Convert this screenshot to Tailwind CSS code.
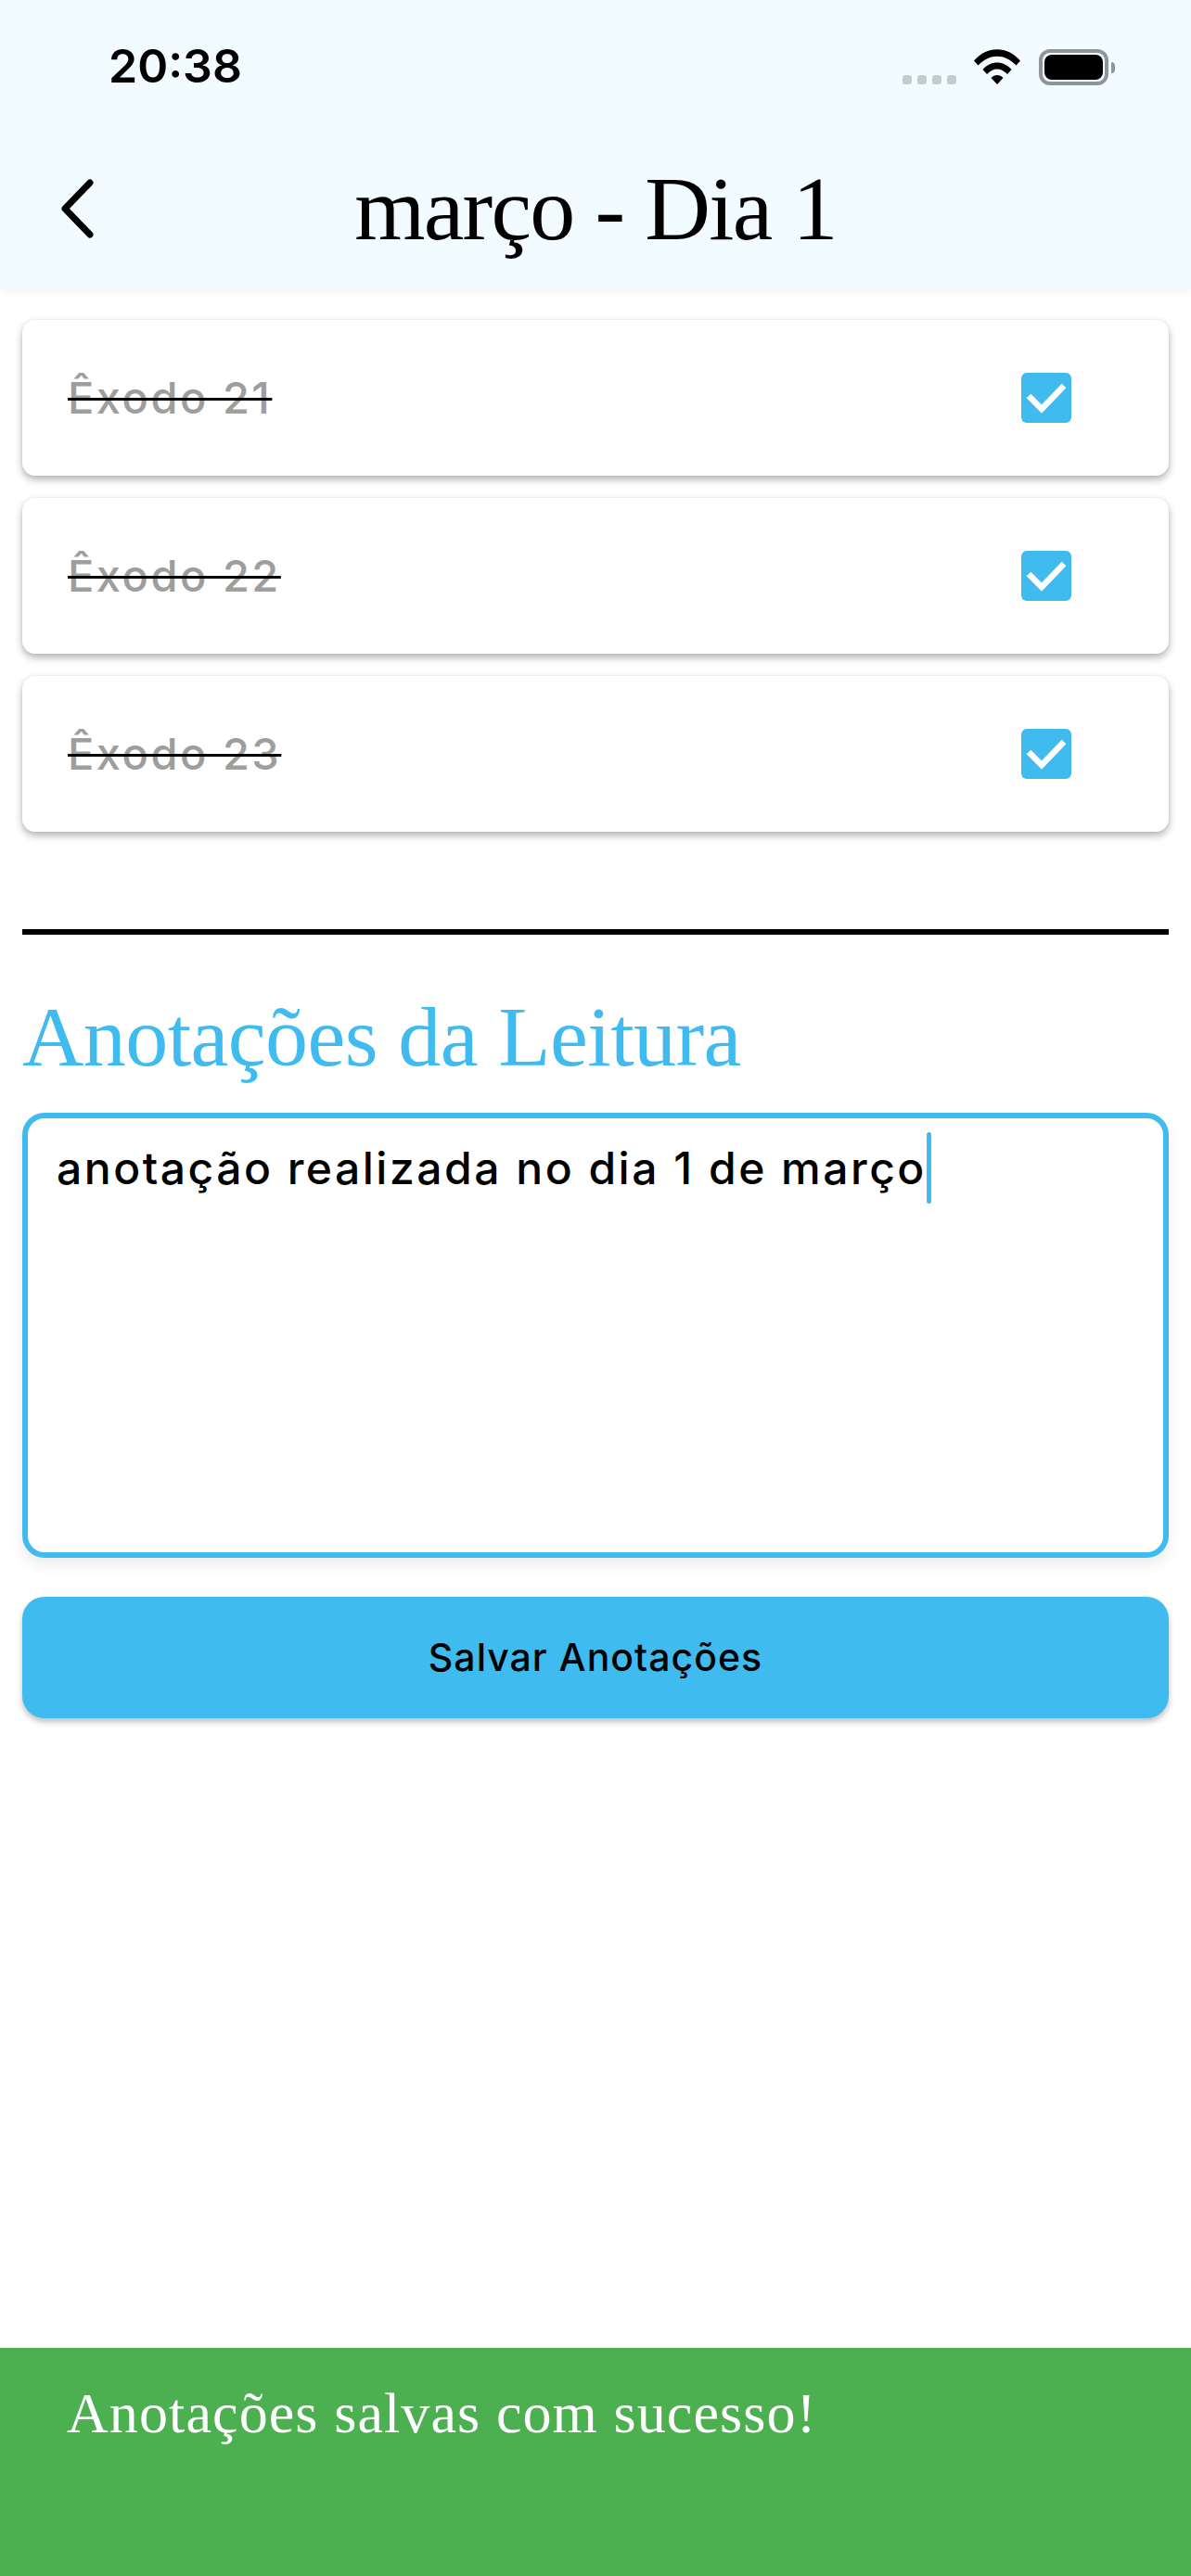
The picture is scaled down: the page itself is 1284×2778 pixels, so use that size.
<!DOCTYPE html>
<html lang="pt-BR">
<head>
  <meta charset="UTF-8">
  <meta name="viewport" content="width=device-width, initial-scale=1.0">
  <title>março - Dia 1</title>
  <script src="https://cdn.jsdelivr.net/npm/@tailwindcss/browser@4"></script>
</head>
<body class="bg-white">
  <div class="w-[1284px] h-[2778px] flex flex-col overflow-hidden font-['Inter',sans-serif]">
    <!-- Header -->
    <header class="h-[312px] bg-[#f2fbff] shadow-[0_4px_8px_rgba(0,0,0,0.04)] flex flex-col">
      <div class="h-[146px] pl-[117px] pr-[82px] pt-[40px] flex justify-between items-start">
        <span class="text-[50px] leading-[62px] font-semibold text-black">20:38</span>
        <div class="flex items-start mt-[13px]">
          <div class="flex gap-[6px] mt-[28px] mr-[19px]">
            <span class="w-[10px] h-[10px] rounded-[3px] bg-[#c4cbcd]"></span>
            <span class="w-[10px] h-[10px] rounded-[3px] bg-[#c4cbcd]"></span>
            <span class="w-[10px] h-[10px] rounded-[3px] bg-[#c4cbcd]"></span>
            <span class="w-[10px] h-[10px] rounded-[3px] bg-[#c4cbcd]"></span>
          </div>
          <svg class="w-[50px] h-[38px] mr-[20px]" viewBox="0 0 50 38" fill="#000">
            <path d="M0 12.5 C14 -4 36 -4 50 12.5 L45.5 17.5 C33 4.5 17 4.5 4.5 17.5 Z"/>
            <path d="M9.5 22 C18 12 32 12 40.5 22 L36 27 C29.5 19.5 20.5 19.5 14 27 Z"/>
            <path d="M18.5 31 C22 27 28 27 31.500 31 L25 38 Z"/>
          </svg>
          <div class="w-[75px] h-[39px] rounded-[12px] border-[4px] border-[#8f9698] p-[2px]">
            <div class="w-full h-full rounded-[8px] bg-black"></div>
          </div>
          <div class="w-[4px] h-[12px] rounded-r-[4px] bg-[#8f9698] mt-[14px] ml-[3px]"></div>
        </div>
      </div>
      <div class="grid grid-cols-[1fr_auto_1fr] items-center h-[158px]">
        <svg class="w-[46px] h-[68px] ml-[60px]" viewBox="0 0 46 68" fill="none" stroke="#000" stroke-width="7" stroke-linecap="round" stroke-linejoin="round">
          <path d="M37 6 L10 34 L37 62"/>
        </svg>
        <h1 class="font-['Liberation_Serif',serif] text-[98px] leading-[118px] tracking-[-1.7px] text-black">março - Dia 1</h1>
        <div></div>
      </div>
    </header>

    <main class="px-[24px] pt-[33px] flex flex-col">
      <!-- Reading list -->
      <div class="flex flex-col gap-[24px]">
        <div class="h-[168px] rounded-[14px] bg-white shadow-[0_4px_8px_rgba(0,0,0,0.3),0_0_4px_rgba(0,0,0,0.05)] pl-[49px] pr-[105px] flex items-center justify-between">
          <span class="text-[47px] font-medium tracking-[2.5px] text-[#9e9e9e] line-through decoration-black decoration-[3px]">Êxodo 21</span>
          <div class="w-[54px] h-[54px] rounded-[6px] bg-[#3fbbef]">
            <svg class="w-[54px] h-[54px]" viewBox="0 0 54 54" fill="none" stroke="#fff" stroke-width="6.5"><path d="M8 25 L22 39 L46 14"/></svg>
          </div>
        </div>
        <div class="h-[168px] rounded-[14px] bg-white shadow-[0_4px_8px_rgba(0,0,0,0.3),0_0_4px_rgba(0,0,0,0.05)] pl-[49px] pr-[105px] flex items-center justify-between">
          <span class="text-[47px] font-medium tracking-[2.5px] text-[#9e9e9e] line-through decoration-black decoration-[3px]">Êxodo 22</span>
          <div class="w-[54px] h-[54px] rounded-[6px] bg-[#3fbbef]">
            <svg class="w-[54px] h-[54px]" viewBox="0 0 54 54" fill="none" stroke="#fff" stroke-width="6.5"><path d="M8 25 L22 39 L46 14"/></svg>
          </div>
        </div>
        <div class="h-[168px] rounded-[14px] bg-white shadow-[0_4px_8px_rgba(0,0,0,0.3),0_0_4px_rgba(0,0,0,0.05)] pl-[49px] pr-[105px] flex items-center justify-between">
          <span class="text-[47px] font-medium tracking-[2.5px] text-[#9e9e9e] line-through decoration-black decoration-[3px]">Êxodo 23</span>
          <div class="w-[54px] h-[54px] rounded-[6px] bg-[#3fbbef]">
            <svg class="w-[54px] h-[54px]" viewBox="0 0 54 54" fill="none" stroke="#fff" stroke-width="6.5"><path d="M8 25 L22 39 L46 14"/></svg>
          </div>
        </div>
      </div>

      <div class="h-[6px] bg-black mt-[105px]"></div>

      <!-- Notes -->
      <h2 class="font-['Liberation_Serif',serif] text-[92px] leading-[110px] tracking-[-0.6px] text-[#3fbbef] mt-[55px]">Anotações da Leitura</h2>
      <div class="h-[480px] mt-[27px] rounded-[24px] border-[6px] border-[#3fbbef] bg-white shadow-[0_8px_16px_rgba(0,0,0,0.08)] pl-[31px] pt-[15px] flex items-start">
        <span class="text-[48px] leading-[77px] font-medium tracking-[2.5px] text-black">anotação realizada no dia 1 de março</span>
        <span class="w-[5px] h-[77px] bg-[#3fbbef] rounded-full"></span>
      </div>
      <button class="h-[131px] mt-[42px] rounded-[24px] bg-[#3fbbef] shadow-[0_4px_6px_rgba(0,0,0,0.25)] text-[41px] font-medium tracking-[1px] text-black">Salvar Anotações</button>
    </main>

    <!-- Snackbar -->
    <div class="mt-auto h-[246px] bg-[#4caf50] pl-[72px] pt-[30px]">
      <span class="font-['Liberation_Serif',serif] text-[62px] leading-[80px] tracking-[1.1px] text-white">Anotações salvas com sucesso!</span>
    </div>
  </div>
</body>
</html>
